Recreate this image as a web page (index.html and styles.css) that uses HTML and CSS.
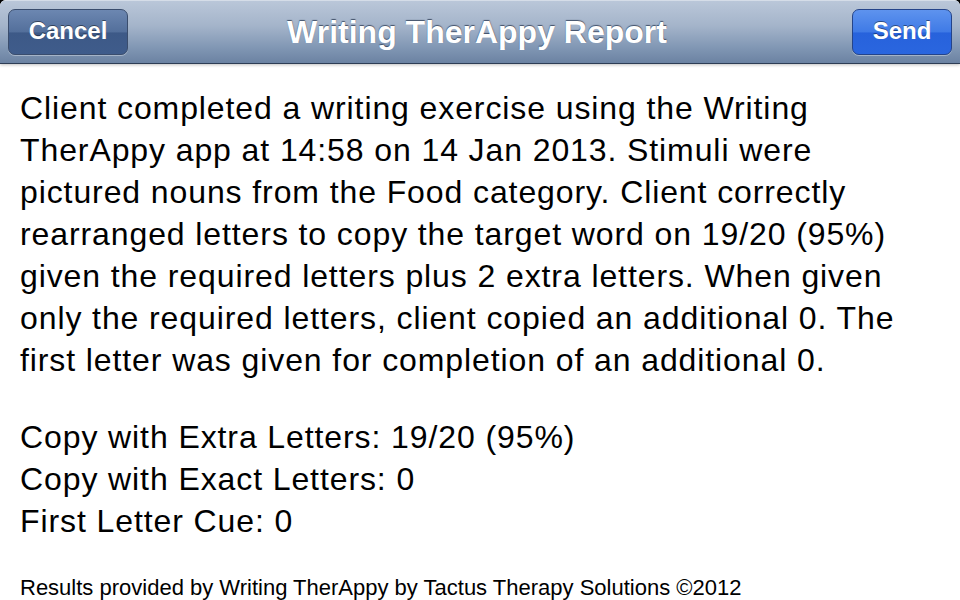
FILE: index.html
```html
<!DOCTYPE html>
<html>
<head>
<meta charset="utf-8">
<link rel="stylesheet" href="styles.css">
</head>
<body>
<div class="screen">
  <header class="navbar">
    <div class="left"><button class="btn btn-cancel">Cancel</button></div>
    <h1 class="title">Writing TherAppy Report</h1>
    <div class="right"><button class="btn btn-send">Send</button></div>
  </header>
  <main class="content">
    <p class="summary">Client completed a writing exercise using the Writing TherAppy app at 14:58 on 14 Jan 2013. Stimuli were pictured nouns from the Food category. Client correctly rearranged letters to copy the target word on 19/20 (95%) given the required letters plus 2 extra letters. When given only the required letters, client copied an additional 0. The first letter was given for completion of an additional 0.</p>
    <div class="stats">
      <div>Copy with Extra Letters: 19/20 (95%)</div>
      <div>Copy with Exact Letters: 0</div>
      <div>First Letter Cue: 0</div>
    </div>
    <p class="footer">Results provided by Writing TherAppy by Tactus Therapy Solutions ©2012</p>
  </main>
</div>
</body>
</html>
```

FILE: styles.css
```css
html, body {
  margin: 0;
  padding: 0;
  background: #000;
}
.screen {
  width: 960px;
  height: 600px;
  background: #fff;
  border-radius: 6px 6px 0 0;
  overflow: hidden;
  display: flex;
  flex-direction: column;
  font-family: "Liberation Sans", Arial, sans-serif;
}
.navbar {
  flex: none;
  height: 64px;
  box-sizing: border-box;
  display: grid;
  grid-template-columns: 1fr auto 1fr;
  align-items: center;
  padding: 0 8px;
  background: linear-gradient(#bac7d9 0%, #a4b4ca 40%, #8197b4 75%, #6b82a2 100%);
  border-top: 1px solid #d5dde8;
  border-bottom: 1px solid #2d3d55;
  box-shadow: 0 1px 3px rgba(0,0,0,0.25);
  position: relative;
}
.right {
  display: flex;
  justify-content: flex-end;
}
.title {
  margin: 0 0 0 -6px;
  font-size: 32px;
  font-weight: bold;
  color: #fff;
  text-shadow: 0 -1px 1px rgba(40,55,80,0.8);
  text-align: center;
}
.btn {
  height: 46px;
  border-radius: 7px;
  font-family: "Liberation Sans", Arial, sans-serif;
  font-weight: bold;
  font-size: 24px;
  color: #fff;
  text-shadow: 0 -1px 0 rgba(0,0,0,0.45);
  padding: 0 0 2px 0;
  margin-top: 0;
}
.btn-cancel {
  width: 120px;
  background: linear-gradient(#6c87b1 0%, #536f9b 50%, #3d5987 52%, #3f5c8b 100%);
  border: 1px solid #3a4d6d;
  box-shadow: 0 1px 0 rgba(255,255,255,0.35);
}
.btn-send {
  width: 100px;
  background: linear-gradient(#5e93ee 0%, #3f7ae6 50%, #2762dc 52%, #2a66df 100%);
  border: 1px solid #24448a;
  box-shadow: 0 1px 0 rgba(255,255,255,0.35);
}
.content {
  flex: 1;
  padding: 23px 20px 0 20px;
  color: #000;
}
.summary {
  margin: 0;
  font-size: 32px;
  line-height: 42px;
  letter-spacing: 0.9px;
}
.stats {
  margin-top: 35px;
  font-size: 32px;
  line-height: 42px;
  letter-spacing: 0.9px;
}
.footer {
  margin: 33px 0 0 0;
  font-size: 22px;
  line-height: 26px;
}
```
